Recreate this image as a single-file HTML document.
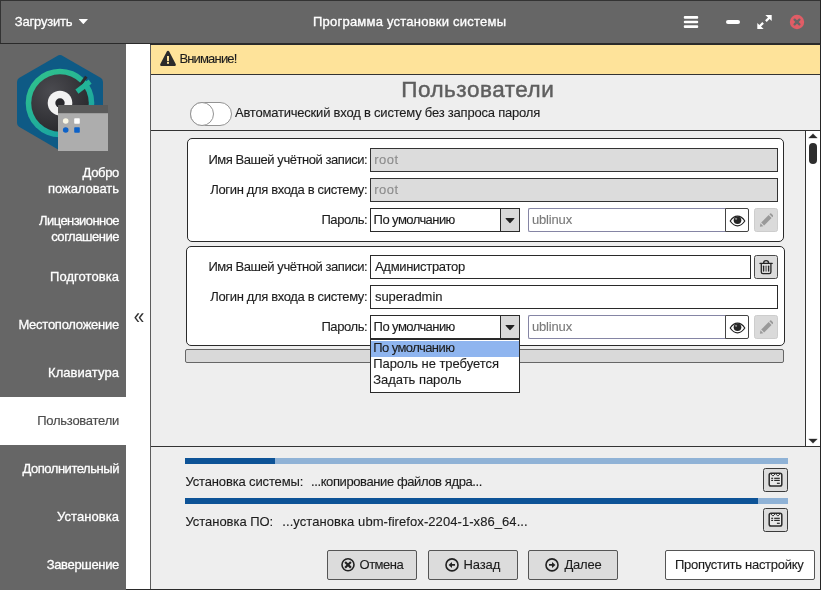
<!DOCTYPE html>
<html lang="ru">
<head>
<meta charset="utf-8">
<title>Программа установки системы</title>
<style>
*{box-sizing:border-box;margin:0;padding:0}
html,body{width:821px;height:590px;overflow:hidden;background:#666}
body{position:relative;font-family:"Liberation Sans",sans-serif;font-size:13px;color:#1c1c1c;-webkit-text-stroke:0.120px currentColor}
.abs{position:absolute}
.t{position:absolute;white-space:nowrap;line-height:16px;height:16px}
.w{color:#fff;-webkit-text-stroke:0.28px #fff}
.nav{position:absolute;left:0;width:119px;text-align:right;color:#fff;line-height:16px;white-space:nowrap;-webkit-text-stroke:0.28px #fff}
.nav span{display:block}
.box{position:absolute;background:#fff;border:1px solid #2a2a2a;border-radius:5px}
.inp{position:absolute;height:24px;background:#fff;border:1px solid #2a2a2a;padding-left:4px;line-height:20px;padding-top:1px;white-space:nowrap;overflow:hidden}
.inp.dis{padding-left:3.200px;background:#dcdcdc;color:#8c8c8c;border-color:#333}
.inp.ph{padding-left:3px;color:#7a7a7a;border-color:#8585a4}
.lbl{position:absolute;text-align:right;white-space:nowrap;line-height:16px;width:200px;left:167.300px}
.btn{position:absolute;background:#dcdcdc;border:1px solid #555;border-radius:2.500px}
.pbtn{position:absolute;top:550px;height:30px;background:#dcdcdc;border:1px solid #555;border-radius:2px}
.pbtn .t{top:6px}
.hl{position:absolute;height:1px;background:#333}
</style>
</head>
<body>
<div id="root" style="position:absolute;left:0;top:0;width:821px;height:590px;will-change:transform">
<!-- HEADER -->
<div class="abs" style="left:0;top:0;width:821px;height:44px;background:#666"></div>
<div class="abs" style="left:0;top:0;width:821px;height:1px;background:#333"></div>
<div class="abs" style="left:0;top:0;width:1px;height:44px;background:#333"></div>
<div class="abs" style="left:0;top:43px;width:821px;height:1px;background:#2a2a2a"></div>
<div class="t w" style="left:14.800px;top:14px"><span style="letter-spacing:-0.207px">Загрузить</span></div>
<svg class="abs" style="left:78.300px;top:18.300px" width="10.600" height="7.060" viewBox="0 0 12 8"><path d="M1.200 1 L10.800 1 Q11.300 1.200 10.900 1.800 L6.500 6.500 Q6 6.900 5.500 6.500 L1.100 1.800 Q0.700 1.200 1.200 1 Z" fill="#fff"/></svg>
<div class="t w" style="left:313px;top:14px;-webkit-text-stroke-width:0.33px"><span style="letter-spacing:0.227px">Программа установки системы</span></div>
<!-- hamburger -->
<svg class="abs" style="left:683px;top:15px" width="16" height="14" viewBox="0 0 16 14"><g fill="#fff"><rect x="0.800" y="1" width="14.400" height="2.700" rx="1"/><rect x="0.800" y="5.650" width="14.400" height="2.700" rx="1"/><rect x="0.800" y="10.300" width="14.400" height="2.700" rx="1"/></g></svg>
<!-- minimize -->
<div class="abs" style="left:726px;top:20px;width:14px;height:4px;background:#fff;border-radius:2px"></div>
<!-- maximize -->
<svg class="abs" style="left:757px;top:15px" width="15" height="14" viewBox="0 0 15 14"><g fill="#fff"><path d="M8.300 0.300 L14.700 0.300 L14.700 6.300 L12.600 4.200 L9.700 7.100 L8.100 5.500 L11 2.600 Z" transform="translate(0,-0.200)"/><path d="M6.700 13.900 L0.300 13.900 L0.300 7.900 L2.400 10 L5.300 7.100 L6.900 8.700 L4 11.600 Z"/></g></svg>
<!-- close -->
<svg class="abs" style="left:789px;top:14px" width="16" height="16" viewBox="0 0 16 16"><circle cx="8" cy="8" r="7.200" fill="#e05d66"/><path d="M5.600 5.600 L10.400 10.400 M10.400 5.600 L5.600 10.400" stroke="#666" stroke-width="2.300" stroke-linecap="round"/></svg>

<!-- SIDEBAR -->
<div class="abs" style="left:0;top:44px;width:126px;height:546px;background:#666"></div>
<div class="abs" style="left:0;top:397px;width:126px;height:48px;background:#fff"></div>
<div class="abs" style="left:126px;top:44px;width:24px;height:546px;background:#fff"></div>
<!-- logo -->
<svg class="abs" style="left:14px;top:50px" width="98" height="104" viewBox="0 0 98 104">
  <defs>
    <radialGradient id="dg" cx="0.350" cy="0.300" r="0.850"><stop offset="0" stop-color="#4b4b50"/><stop offset="1" stop-color="#242428"/></radialGradient>
    <linearGradient id="gg" x1="0.200" y1="0" x2="0.800" y2="1"><stop offset="0" stop-color="#30c28c"/><stop offset="1" stop-color="#169fa4"/></linearGradient>
  </defs>
  <path d="M47.500 5.300 L87 28 Q89 29.300 89 32 L89 73 Q89 75.500 87 76.800 L47.500 99.700 Q46 100.500 44.500 99.700 L5 76.800 Q3 75.500 3 73 L3 32 Q3 29.300 5 28 L44.500 5.300 Q46 4.500 47.500 5.300 Z" fill="#0e5a85"/>
  <circle cx="46" cy="53" r="34.300" fill="url(#gg)"/>
  <circle cx="46" cy="53" r="28.800" fill="url(#dg)"/>
  <path d="M72.300 26.600 L66.600 34.600" stroke="#2b2b2f" stroke-width="3"/>
  <path d="M74.600 29.600 L77.600 33.800 L64.400 43.800 L61.400 39.600 Z" fill="#22b497"/>
  <circle cx="46" cy="53" r="12.300" fill="#f2f2f2"/>
  <circle cx="46" cy="53" r="4.700" fill="#28282c"/>
  <rect x="44" y="55" width="50" height="46" fill="#adadad"/>
  <rect x="44" y="55" width="50" height="8.200" fill="#5b5b5b"/>
  <circle cx="51.700" cy="71" r="2.800" fill="#f8f5e4"/>
  <rect x="60.200" y="68.200" width="5.600" height="5.600" rx="0.800" fill="#fcfcfc"/>
  <circle cx="51.700" cy="80" r="2.800" fill="#0d62c8"/>
  <rect x="60.200" y="77.200" width="5.600" height="5.600" rx="0.800" fill="#0d62c8"/>
</svg>
<div class="nav" style="top:165px"><span><span style="letter-spacing:-0.339px">Добро</span></span><span><span style="letter-spacing:-0.045px">пожаловать</span></span></div>
<div class="nav" style="top:213px"><span><span style="letter-spacing:-0.565px">Лицензионное</span></span><span><span style="letter-spacing:-0.468px">соглашение</span></span></div>
<div class="nav" style="top:269px"><span><span style="letter-spacing:0.058px">Подготовка</span></span></div>
<div class="nav" style="top:317px"><span><span style="letter-spacing:-0.253px">Местоположение</span></span></div>
<div class="nav" style="top:365px"><span><span style="letter-spacing:0.058px">Клавиатура</span></span></div>
<div class="nav" style="top:413px;color:#4c4c4c;-webkit-text-stroke:0.150px #4c4c4c"><span><span style="letter-spacing:-0.255px">Пользователи</span></span></div>
<div class="nav" style="top:461px"><span><span style="letter-spacing:-0.454px">Дополнительный</span></span></div>
<div class="nav" style="top:509px"><span><span style="letter-spacing:0.061px">Установка</span></span></div>
<div class="nav" style="top:557px"><span><span style="letter-spacing:-0.334px">Завершение</span></span></div>
<div class="t" id="chev" style="left:128.500px;top:304px;font-size:22px;line-height:26px;height:26px;color:#333;width:20px;text-align:center;-webkit-text-stroke:0;transform:scaleX(0.860)">«</div>
<!-- MAIN -->
<div class="abs" style="left:150px;top:44px;width:671px;height:546px;background:#eee"></div>
<div class="abs" style="left:150px;top:44px;width:1px;height:546px;background:#5c5c5c"></div>
<div class="abs" style="left:820px;top:0;width:1px;height:590px;background:#262626"></div>
<div class="abs" style="left:150px;top:44px;width:671px;height:1px;background:#2a2a2a"></div>
<div class="abs" style="left:126px;top:589px;width:695px;height:1px;background:#2a2a2a"></div>
<div class="abs" style="left:151px;top:45px;width:669px;height:29px;background:#fee39a"></div>
<div class="hl" style="left:151px;top:74px;width:669px"></div>
<svg class="abs" style="left:159px;top:50px" width="18" height="17" viewBox="0 0 18 17"><path d="M9 0.800 Q9.800 0.800 10.200 1.600 L16.800 14.200 Q17.300 15.800 15.800 15.900 L2.200 15.900 Q0.700 15.800 1.200 14.200 L7.800 1.600 Q8.200 0.800 9 0.800 Z" fill="#2b2b2b"/><rect x="8" y="6" width="2" height="5" fill="#fee39a"/><rect x="8" y="11.800" width="2" height="2" fill="#fee39a"/></svg>
<div class="t" style="left:179.400px;top:50.500px"><span style="letter-spacing:-0.829px">Внимание!</span></div>

<div class="t" id="ttl" style="left:401.200px;top:77.400px;font-size:22.500px;color:#5e5e5e;line-height:26px;height:26px;-webkit-text-stroke:0.450px #5e5e5e"><span style="letter-spacing:0.528px">Пользователи</span></div>
<!-- toggle -->
<div class="abs" style="left:190px;top:102px;width:42px;height:24px;border-radius:12px;background:#fff;border:1.800px solid #939393"></div>
<div class="abs" style="left:190px;top:102px;width:24px;height:24px;border-radius:12px;background:#fff;border:1.800px solid #939393"></div>
<div class="t" style="left:235px;top:105px"><span style="letter-spacing:-0.210px">Автоматический вход в систему без запроса пароля</span></div>
<div class="hl" style="left:151px;top:130px;width:669px"></div>

<!-- scrollbar -->
<div class="abs" style="left:806px;top:131px;width:14px;height:315px;background:#fff"></div>
<div class="abs" style="left:805px;top:131px;width:1px;height:315px;background:#333"></div>
<svg class="abs" style="left:808px;top:133px" width="10" height="6" viewBox="0 0 10 6"><path d="M0.700 5.100 L5 0.700 L9.300 5.100 Z" fill="#2a2a2a" stroke="#2a2a2a" stroke-width="0.300" stroke-linejoin="round"/></svg>
<div class="abs" style="left:809px;top:143px;width:8px;height:21px;border-radius:4px;background:#2e2e2e"></div>
<svg class="abs" style="left:808px;top:438px" width="10" height="6" viewBox="0 0 10 6"><path d="M0.700 0.900 L5 5.300 L9.300 0.900 Z" fill="#2a2a2a" stroke="#2a2a2a" stroke-width="0.300" stroke-linejoin="round"/></svg>

<!-- box 1 -->
<div class="box" style="left:187px;top:138px;width:597px;height:104px"></div>
<div class="lbl" style="top:152px"><span style="letter-spacing:-0.443px">Имя Вашей учётной записи:</span></div>
<div class="inp dis" style="left:370px;top:148px;width:408px"><span style="letter-spacing:0.548px">root</span></div>
<div class="lbl" style="top:182px"><span style="letter-spacing:-0.347px">Логин для входа в систему:</span></div>
<div class="inp dis" style="left:370px;top:178px;width:408px"><span style="letter-spacing:0.548px">root</span></div>
<div class="lbl" style="top:212px"><span style="letter-spacing:-0.403px">Пароль:</span></div>
<div class="inp" style="left:370px;top:208px;width:150px;padding-left:2.600px"><span style="letter-spacing:-0.560px">По умолчанию</span></div>
<div class="abs" style="left:500px;top:209px;width:19px;height:22px;background:#d9d9d9;border-left:1px solid #2a2a2a"></div>
<svg class="abs" style="left:505px;top:217px" width="10" height="7" viewBox="0 0 10 7"><path d="M0.800 1 L9.200 1 Q9.600 1.200 9.300 1.700 L5.400 6 Q5 6.300 4.600 6 L0.700 1.700 Q0.400 1.200 0.800 1 Z" fill="#222"/></svg>
<div class="inp ph" style="left:528px;top:208px;width:198px;border-right:0;border-radius:2px 0 0 2px"><span style="letter-spacing:-0.172px">ublinux</span></div>
<div class="inp" style="left:725px;top:208px;width:24px;border-color:#444;border-radius:0 2px 2px 0"></div>
<svg class="abs" style="left:728.500px;top:213.500px" width="17" height="14" viewBox="0 0 17 14"><path d="M1.200 7 Q4.400 2.200 8.500 2.200 Q12.600 2.200 15.800 7 Q12.600 11.800 8.500 11.800 Q4.400 11.800 1.200 7 Z" fill="#fff" stroke="#222" stroke-width="1.200" stroke-linejoin="round"/><circle cx="8.500" cy="6.300" r="3.800" fill="#262626"/><circle cx="7.100" cy="4.800" r="1.100" fill="#8a8a8a"/></svg>
<div class="btn" style="left:754px;top:208px;width:24px;height:24px;border-color:#cdcdcd;background:#dadada"></div>
<svg class="abs" style="left:758.600px;top:212.9px" width="14.600" height="14.600" viewBox="0 0 16 16"><g fill="#999"><path d="M1 15 L1.600 11.200 L4.800 14.400 Z"/><path d="M2.400 10.400 L10.600 2.200 L13.800 5.400 L5.600 13.600 Z"/><path d="M11.400 1.400 L12.200 0.600 Q12.800 0.200 13.400 0.600 L15.400 2.600 Q15.800 3.200 15.400 3.800 L14.600 4.600 Z"/></g></svg>

<!-- box 2 -->
<div class="box" style="left:186px;top:246px;width:599px;height:100px"></div>
<div class="lbl" style="top:259px"><span style="letter-spacing:-0.443px">Имя Вашей учётной записи:</span></div>
<div class="inp" style="left:370px;top:255px;width:381px"><span style="letter-spacing:-0.307px">Администратор</span></div>
<div class="btn" style="left:754px;top:255px;width:24px;height:24px;border-color:#4a4a4a"></div>
<svg class="abs" style="left:759px;top:259px" width="14" height="16" viewBox="0 0 14 16"><g fill="none" stroke="#262626" stroke-width="1.300" stroke-linecap="round" stroke-linejoin="round"><path d="M1 4.400 L13.200 4.400"/><path d="M4.600 4.200 Q4.600 1.600 7.100 1.600 Q9.600 1.600 9.600 4.200"/><path d="M2.300 4.600 L2.300 13 Q2.300 14.600 3.900 14.600 L10.300 14.600 Q11.900 14.600 11.900 13 L11.900 4.600"/><path d="M4.600 7.200 L4.600 12"/><path d="M9.600 7.200 L9.600 12"/><path d="M7.100 7.200 L7.100 12" stroke="#777" stroke-width="1.600"/></g></svg>
<div class="lbl" style="top:289px"><span style="letter-spacing:-0.347px">Логин для входа в систему:</span></div>
<div class="inp" style="left:370px;top:285px;width:408px"><span style="letter-spacing:-0.054px">superadmin</span></div>
<div class="lbl" style="top:319px"><span style="letter-spacing:-0.403px">Пароль:</span></div>
<div class="inp" style="left:370px;top:315px;width:150px;padding-left:2.600px"><span style="letter-spacing:-0.560px">По умолчанию</span></div>
<div class="abs" style="left:500px;top:316px;width:19px;height:22px;background:#d9d9d9;border-left:1px solid #2a2a2a"></div>
<svg class="abs" style="left:505px;top:324px" width="10" height="7" viewBox="0 0 10 7"><path d="M0.800 1 L9.200 1 Q9.600 1.200 9.300 1.700 L5.400 6 Q5 6.300 4.600 6 L0.700 1.700 Q0.400 1.200 0.800 1 Z" fill="#222"/></svg>
<div class="inp ph" style="left:528px;top:315px;width:198px;border-right:0;border-radius:2px 0 0 2px"><span style="letter-spacing:-0.172px">ublinux</span></div>
<div class="inp" style="left:725px;top:315px;width:24px;border-color:#444;border-radius:0 2px 2px 0"></div>
<svg class="abs" style="left:728.500px;top:320.500px" width="17" height="14" viewBox="0 0 17 14"><path d="M1.200 7 Q4.400 2.200 8.500 2.200 Q12.600 2.200 15.800 7 Q12.600 11.800 8.500 11.800 Q4.400 11.800 1.200 7 Z" fill="#fff" stroke="#222" stroke-width="1.200" stroke-linejoin="round"/><circle cx="8.500" cy="6.300" r="3.800" fill="#262626"/><circle cx="7.100" cy="4.800" r="1.100" fill="#8a8a8a"/></svg>
<div class="btn" style="left:754px;top:315px;width:24px;height:24px;border-color:#cdcdcd;background:#dadada"></div>
<svg class="abs" style="left:758.600px;top:319.9px" width="14.600" height="14.600" viewBox="0 0 16 16"><g fill="#999"><path d="M1 15 L1.600 11.200 L4.800 14.400 Z"/><path d="M2.400 10.400 L10.600 2.200 L13.800 5.400 L5.600 13.600 Z"/><path d="M11.400 1.400 L12.200 0.600 Q12.800 0.200 13.400 0.600 L15.400 2.600 Q15.800 3.200 15.400 3.800 L14.600 4.600 Z"/></g></svg>

<!-- gray bar -->
<div class="abs" style="left:185px;top:349px;width:599px;height:14px;background:#d9d9d9;border:1px solid #666;border-radius:2px"></div>

<!-- dropdown -->
<div class="abs" style="left:370px;top:339px;width:150px;height:54px;background:#fff;border:1px solid #2a2a2a"></div>
<div class="abs" style="left:371px;top:341px;width:148px;height:16px;background:#8fb5ef"></div>
<div class="t" style="left:373.200px;top:340px"><span style="letter-spacing:-0.560px">По умолчанию</span></div>
<div class="t" style="left:373.200px;top:356px"><span style="letter-spacing:-0.046px">Пароль не требуется</span></div>
<div class="t" style="left:373.200px;top:372px"><span style="letter-spacing:-0.036px">Задать пароль</span></div>

<!-- bottom -->
<div class="hl" style="left:151px;top:446px;width:669px"></div>
<div class="abs" style="left:185px;top:458px;width:603px;height:6px;background:#8fb2d6"></div>
<div class="abs" style="left:185px;top:458px;width:90px;height:6px;background:#0d5397"></div>
<div class="t" style="left:185.500px;top:474px"><span style="letter-spacing:-0.147px">Установка системы:</span></div>
<div class="t" style="left:311px;top:474px"><span style="letter-spacing:-0.398px">...копирование файлов ядра...</span></div>
<div class="btn" style="left:763px;top:468px;width:25px;height:24px;border-color:#3a3a3a"></div>
<svg class="abs" style="left:768px;top:472px" width="15" height="15" viewBox="0 0 15 15"><rect x="1.200" y="1.200" width="12.600" height="12.800" rx="1.800" fill="#e9e9e9" stroke="#2a2a2a" stroke-width="1.500"/><path d="M2.600 1.600 L4.900 4.100 L7.400 1.600 L9.900 4.100 L12.300 1.600" fill="none" stroke="#3a3a3a" stroke-width="1"/><g fill="#2a2a2a"><rect x="3.200" y="5.700" width="1.900" height="1.200"/><rect x="6.200" y="5.700" width="5.600" height="1.200"/><rect x="3.200" y="7.800" width="1.900" height="1.200"/><rect x="6.200" y="7.800" width="5.600" height="1.200"/><rect x="8.900" y="10.700" width="2.900" height="1.200"/></g></svg>
<div class="abs" style="left:185px;top:498px;width:603px;height:6px;background:#8fb2d6"></div>
<div class="abs" style="left:185px;top:498px;width:573px;height:6px;background:#0d5397"></div>
<div class="t" style="left:185.500px;top:514px"><span style="letter-spacing:-0.040px">Установка ПО:</span></div>
<div class="t" style="left:282.300px;top:514px"><span style="letter-spacing:0.071px">...установка ubm-firefox-2204-1-x86_64...</span></div>
<div class="btn" style="left:763px;top:508px;width:25px;height:24px;border-color:#3a3a3a"></div>
<svg class="abs" style="left:768px;top:512px" width="15" height="15" viewBox="0 0 15 15"><rect x="1.200" y="1.200" width="12.600" height="12.800" rx="1.800" fill="#e9e9e9" stroke="#2a2a2a" stroke-width="1.500"/><path d="M2.600 1.600 L4.900 4.100 L7.400 1.600 L9.900 4.100 L12.300 1.600" fill="none" stroke="#3a3a3a" stroke-width="1"/><g fill="#2a2a2a"><rect x="3.200" y="5.700" width="1.900" height="1.200"/><rect x="6.200" y="5.700" width="5.600" height="1.200"/><rect x="3.200" y="7.800" width="1.900" height="1.200"/><rect x="6.200" y="7.800" width="5.600" height="1.200"/><rect x="8.900" y="10.700" width="2.900" height="1.200"/></g></svg>

<div class="pbtn" style="left:327px;width:90px"><svg class="abs" style="left:12.100px;top:6px" width="16" height="16" viewBox="0 0 16 16"><circle cx="8" cy="7.800" r="6" fill="none" stroke="#222" stroke-width="1.600"/><path d="M5.900 5.700 L10.100 9.900 M10.100 5.700 L5.900 9.900" stroke="#222" stroke-width="2.200" stroke-linecap="square"/></svg><div class="t" style="left:31.500px"><span style="letter-spacing:-0.476px">Отмена</span></div></div>
<div class="pbtn" style="left:428px;width:90px"><svg class="abs" style="left:14.900px;top:6px" width="16" height="16" viewBox="0 0 16 16"><circle cx="8" cy="7.900" r="6" fill="none" stroke="#222" stroke-width="1.600"/><path d="M4.600 7.900 L8 4.900 L8 7.100 L11 7.100 L11 8.700 L8 8.700 L8 10.900 Z" fill="#222"/></svg><div class="t" style="left:34.500px"><span style="letter-spacing:-0.130px">Назад</span></div></div>
<div class="pbtn" style="left:528px;width:90px"><svg class="abs" style="left:14.900px;top:6px" width="16" height="16" viewBox="0 0 16 16"><circle cx="8" cy="7.900" r="6" fill="none" stroke="#222" stroke-width="1.600"/><path d="M11.400 7.900 L8 4.900 L8 7.100 L5 7.100 L5 8.700 L8 8.700 L8 10.900 Z" fill="#222"/></svg><div class="t" style="left:35.500px"><span style="letter-spacing:-0.219px">Далее</span></div></div>
<div class="pbtn" style="left:665px;width:150px;background:#fff"><div class="t" style="left:9px"><span style="letter-spacing:-0.289px">Пропустить настройку</span></div></div>

</div>
</body>
</html>
